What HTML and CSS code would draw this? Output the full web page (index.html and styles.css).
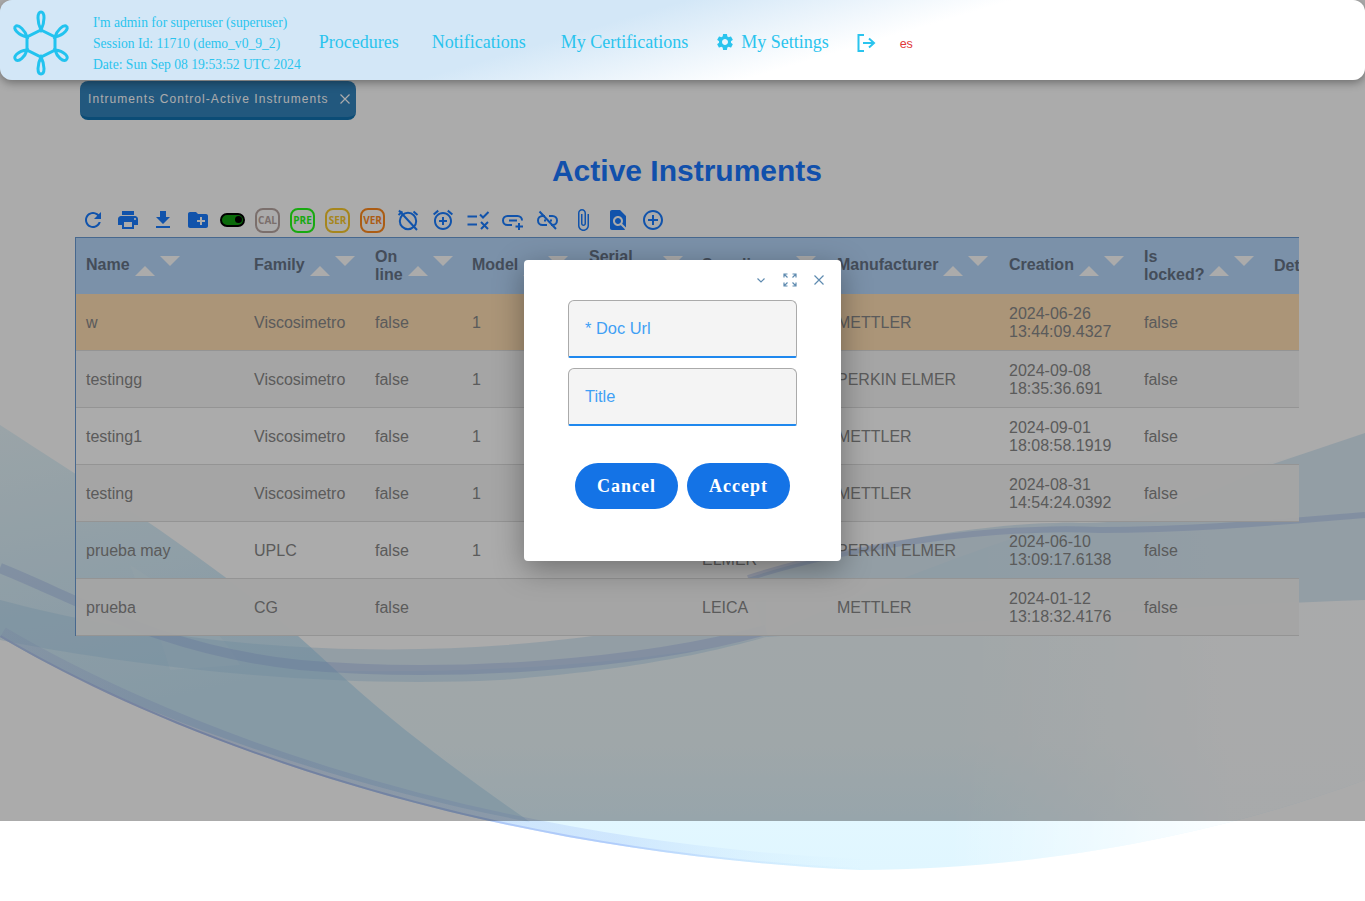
FILE: index.html
```html
<!DOCTYPE html>
<html lang="en">
<head>
    <meta charset="UTF-8">
    <title>Active Instruments</title>
    <link rel="stylesheet" href="styles.css">
</head>
<body>
    <!-- fondo decorativo -->
    <svg class="waves" viewBox="0 0 1365 901" width="1365" height="901" aria-hidden="true">
        <defs>
            <linearGradient id="mainFill" x1="0" y1="0" x2="0" y2="1">
                <stop offset="0" stop-color="#f4fbfd"/>
                <stop offset="0.7" stop-color="#eef9fd"/>
                <stop offset="0.88" stop-color="#e2f7ff"/>
                <stop offset="1" stop-color="#e0f6ff"/>
            </linearGradient>
            <linearGradient id="fadeOut" gradientUnits="userSpaceOnUse" x1="950" y1="0" x2="1230" y2="0">
                <stop offset="0" stop-color="#fff" stop-opacity="0"/>
                <stop offset="1" stop-color="#fff" stop-opacity=".85"/>
            </linearGradient>
            <linearGradient id="fanFill" gradientUnits="userSpaceOnUse" x1="0" y1="430" x2="60" y2="720">
                <stop offset="0" stop-color="#e6f5fb"/>
                <stop offset="1" stop-color="#c8e6f7"/>
            </linearGradient>
            <linearGradient id="edgeFill" gradientUnits="userSpaceOnUse" x1="0" y1="0" x2="880" y2="0">
                <stop offset="0" stop-color="#b0c2ee"/>
                <stop offset="0.25" stop-color="#98aeea"/>
                <stop offset="0.7" stop-color="#a4c2fa"/>
                <stop offset="1" stop-color="#c8ecff" stop-opacity="0"/>
            </linearGradient>
            <clipPath id="mainClip">
                <path d="M0 637C140 720 440 850 860 870C1050 870 1230 830 1365 780V440H0Z"/>
            </clipPath>
        </defs>
        <path fill="url(#mainFill)" d="M0 637C140 720 440 850 860 870C1050 870 1230 830 1365 780V440C1180 480 950 550 766 637C600 675 250 690 0 637Z"/>
        <rect x="950" y="440" width="415" height="440" fill="url(#fadeOut)" clip-path="url(#mainClip)"/>
        <path fill="url(#fanFill)" d="M0 425C100 490 230 570 330 665C400 730 470 780 530 822C360 790 140 720 0 637Z"/>
        <path class="wave-left-2" d="M130 565C170 590 215 620 240 665L170 670C160 630 140 595 130 565Z"/>
        <path class="wave-mid" d="M0 600C300 680 600 650 766 600L766 637C720 650 640 670 500 680C300 690 100 660 0 640Z"/>
        <path class="wave-right" d="M748 578C850 545 1000 520 1079 523C1150 525 1200 495 1270 465L1365 433V600C1200 605 1000 620 766 637Z"/>
        <path class="wave-strand" d="M0 568C80 600 160 650 300 665C450 678 640 665 766 630"/>
        <path class="wave-strand thin" d="M748 578C850 545 1000 525 1100 530C1200 530 1300 520 1365 515"/>
        <g clip-path="url(#mainClip)">
            <path class="wave-edge wide" d="M0 637C140 720 440 850 860 870"/>
            <path class="wave-edge" d="M0 637C140 720 440 850 860 870"/>
        </g>
    </svg>

    <header class="topbar">
        <svg class="logo" viewBox="0 0 56 66" width="56" height="66" aria-hidden="true">
            <path d="M28 20L42 27V40L28 47L14 40V27Z"/>
            <path d="M28 20C24 12 24 2 28 2C32 2 32 12 28 20Z"/>
            <path d="M28 47C24 55 24 64 28 64C32 64 32 55 28 47Z"/>
            <path d="M42 27C44 20 50 15 53 16C57 18 51 25 42 27Z"/>
            <path d="M42 40C51 41 57 47 53 50C50 52 44 47 42 40Z"/>
            <path d="M14 27C12 20 6 15 3 16C-1 18 5 25 14 27Z"/>
            <path d="M14 40C5 41 -1 47 3 50C6 52 12 47 14 40Z"/>
        </svg>
        <div class="session">
            <div>I'm admin for superuser (superuser)</div>
            <div>Session Id: 11710 (demo_v0_9_2)</div>
            <div>Date: Sun Sep 08 19:53:52 UTC 2024</div>
        </div>
        <nav class="menu">
            <a class="m-proc">Procedures</a>
            <a class="m-noti">Notifications</a>
            <a class="m-cert">My Certifications</a>
            <a class="m-sett">
                <svg viewBox="0 0 24 24" width="20" height="20" aria-hidden="true"><path d="M19.14 12.94c.04-.3.06-.61.06-.94 0-.32-.02-.64-.07-.94l2.03-1.58c.18-.14.23-.41.12-.61l-1.92-3.32c-.12-.22-.37-.29-.59-.22l-2.39.96c-.5-.38-1.03-.7-1.62-.94l-.36-2.54c-.04-.24-.24-.41-.48-.41h-3.84c-.24 0-.43.17-.47.41l-.36 2.54c-.59.24-1.13.57-1.62.94l-2.39-.96c-.22-.08-.47 0-.59.22L2.74 8.87c-.12.21-.08.47.12.61l2.03 1.58c-.05.3-.09.63-.09.94s.02.64.07.94l-2.03 1.58c-.18.14-.23.41-.12.61l1.92 3.32c.12.22.37.29.59.22l2.39-.96c.5.38 1.03.7 1.62.94l.36 2.54c.05.24.24.41.48.41h3.84c.24 0 .44-.17.47-.41l.36-2.54c.59-.24 1.13-.56 1.62-.94l2.39.96c.22.08.47 0 .59-.22l1.92-3.32c.12-.22.07-.47-.12-.61l-2.01-1.58zM12 15.6c-1.98 0-3.6-1.62-3.6-3.6s1.62-3.6 3.6-3.6 3.6 1.62 3.6 3.6-1.62 3.6-3.6 3.6z"/></svg>
                My Settings
            </a>
            <a class="m-out">
                <svg viewBox="0 0 20 20" width="20" height="20" aria-hidden="true"><path d="M8 2H2.500V18H8M7 10H18M13 5.500L18 10L13 14.500" fill="none" stroke-width="2"/></svg>
            </a>
            <a class="m-lang">es</a>
        </nav>
    </header>

    <main class="content">
        <div class="tabs">
            <div class="tab">
                Intruments Control-Active Instruments
                <svg class="tab-x" viewBox="0 0 10 10" width="10" height="10" aria-hidden="true"><path d="M.5 .5L9.500 9.500M9.500 .5L.5 9.500"/></svg>
            </div>
        </div>
        <h1 class="title">Active Instruments</h1>

        <div class="toolbar">
            <svg viewBox="0 0 24 24"><path d="M17.65 6.35C16.2 4.9 14.21 4 12 4c-4.42 0-7.99 3.58-7.99 8s3.57 8 7.99 8c3.73 0 6.84-2.55 7.73-6h-2.08c-.82 2.33-3.04 4-5.65 4-3.31 0-6-2.69-6-6s2.69-6 6-6c1.66 0 3.14.69 4.22 1.78L13 11h7V4l-2.35 2.35z"/></svg>
            <svg viewBox="0 0 24 24"><path d="M19 8H5c-1.66 0-3 1.34-3 3v6h4v4h12v-4h4v-6c0-1.66-1.34-3-3-3zm-3 11H8v-5h8v5zm3-7c-.55 0-1-.45-1-1s.45-1 1-1 1 .45 1 1-.45 1-1 1zm-1-9H6v4h12V3z"/></svg>
            <svg viewBox="0 0 24 24"><path d="M19 9h-4V3H9v6H5l7 7 7-7zM5 18v2h14v-2H5z"/></svg>
            <svg viewBox="0 0 24 24"><path d="M20 6h-8l-2-2H4c-1.11 0-1.99.89-1.99 2L2 18c0 1.11.89 2 2 2h16c1.11 0 2-.89 2-2V8c0-1.11-.89-2-2-2zm-1 8h-3v3h-2v-3h-3v-2h3V9h2v3h3v2z"/></svg>
            <span class="toggle"><span class="toggle-dot"></span></span>
            <span class="badge b-cal">CAL</span>
            <span class="badge b-pre">PRE</span>
            <span class="badge b-ser">SER</span>
            <span class="badge b-ver">VER</span>
            <svg viewBox="0 0 24 24" class="line"><circle cx="12" cy="13" r="8.200"/><path d="M3 2.500L21 22M2.500 7L6.500 3.500M21.500 7L17.500 3.500"/></svg>
            <svg viewBox="0 0 24 24"><path d="M7.88 3.39L6.6 1.86 2 5.71l1.29 1.53 4.59-3.85zM22 5.72l-4.6-3.86-1.29 1.53 4.6 3.86L22 5.72zM12 4c-4.97 0-9 4.03-9 9s4.02 9 9 9c4.97 0 9-4.03 9-9s-4.03-9-9-9zm0 16c-3.87 0-7-3.13-7-7s3.13-7 7-7 7 3.13 7 7-3.13 7-7 7zm1-11h-2v3H8v2h3v3h2v-3h3v-2h-3V9z"/></svg>
            <svg viewBox="0 0 24 24" class="line"><path d="M1.500 8.500H11M1.500 16.500H11M14 6.500L17 9.500L22.500 4M15 14L22 21M22 14L15 21"/></svg>
            <svg viewBox="0 0 24 24" class="line"><path d="M11 17H6.500C4 17 2 15 2 12.500S4 8 6.500 8H16.500C19 8 21 10 21 12.500M8 12.500H16M18 15V22M14.500 18.500H22"/></svg>
            <svg viewBox="0 0 24 24" class="line"><path d="M9 8H6.500C4 8 2 10 2 12.500S4 17 6.500 17H11M13 8H16.500C19 8 21 10 21 12.500S19 17 16.500 17H15M8 12.500H10M14 12.500H16M3.500 3.500L20 21"/></svg>
            <svg viewBox="0 0 24 24"><path d="M16.5 6v11.5c0 2.21-1.79 4-4 4s-4-1.79-4-4V5c0-1.38 1.12-2.5 2.5-2.5s2.5 1.12 2.5 2.5v10.5c0 .55-.45 1-1 1s-1-.45-1-1V6H10v9.500c0 1.38 1.12 2.5 2.5 2.5s2.5-1.12 2.5-2.5V5c0-2.21-1.79-4-4-4S7 2.79 7 5v12.500c0 3.04 2.46 5.5 5.5 5.5s5.5-2.46 5.5-5.5V6h-1.500z"/></svg>
            <svg viewBox="0 0 24 24"><path d="M20 19.59V8l-6-6H6c-1.1 0-1.99.9-1.99 2L4 20c0 1.1.89 2 1.99 2H18c.45 0 .85-.15 1.19-.4l-4.43-4.43c-.8.52-1.74.83-2.76.83-2.76 0-5-2.24-5-5s2.24-5 5-5 5 2.24 5 5c0 1.02-.31 1.96-.83 2.75L20 19.59zM9 13c0 1.66 1.34 3 3 3s3-1.34 3-3-1.34-3-3-3-3 1.34-3 3z"/></svg>
            <svg viewBox="0 0 24 24"><path d="M13 7h-2v4H7v2h4v4h2v-4h4v-2h-4V7zm-1-5C6.48 2 2 6.48 2 12s4.48 10 10 10 10-4.48 10-10S17.52 2 12 2zm0 18c-4.41 0-8-3.59-8-8s3.59-8 8-8 8 3.59 8 8-3.59 8-8 8z"/></svg>
        </div>

        <div class="table-wrap">
            <table class="grid">
                <colgroup>
                    <col class="c1"><col class="c2"><col class="c3"><col class="c4"><col class="c5">
                    <col class="c6"><col class="c7"><col class="c8"><col class="c9"><col class="c10">
                </colgroup>
                <thead>
                    <tr>
                        <th><div class="th-in"><span>Name</span><i class="up"></i><i class="down"></i></div></th>
                        <th><div class="th-in"><span>Family</span><i class="up"></i><i class="down"></i></div></th>
                        <th><div class="th-in"><span class="two">On<br>line</span><i class="up"></i><i class="down"></i></div></th>
                        <th><div class="th-in"><span>Model</span><i class="up"></i><i class="down"></i></div></th>
                        <th><div class="th-in"><span class="two">Serial<br>Num.</span><i class="up"></i><i class="down"></i></div></th>
                        <th><div class="th-in"><span>Supplier</span><i class="up"></i><i class="down"></i></div></th>
                        <th><div class="th-in"><span>Manufacturer</span><i class="up"></i><i class="down"></i></div></th>
                        <th><div class="th-in"><span>Creation</span><i class="up"></i><i class="down"></i></div></th>
                        <th><div class="th-in"><span class="two">Is<br>locked?</span><i class="up"></i><i class="down"></i></div></th>
                        <th>Details</th>
                    </tr>
                </thead>
                <tbody>
                    <tr class="selected"><td>w</td><td>Viscosimetro</td><td>false</td><td>1</td><td></td><td>LEICA</td><td>METTLER</td><td>2024-06-26 13:44:09.4327</td><td>false</td><td></td></tr>
                    <tr class="alt"><td>testingg</td><td>Viscosimetro</td><td>false</td><td>1</td><td></td><td>LEICA</td><td>PERKIN ELMER</td><td>2024-09-08 18:35:36.691</td><td>false</td><td></td></tr>
                    <tr><td>testing1</td><td>Viscosimetro</td><td>false</td><td>1</td><td></td><td>LEICA</td><td>METTLER</td><td>2024-09-01 18:08:58.1919</td><td>false</td><td></td></tr>
                    <tr class="alt"><td>testing</td><td>Viscosimetro</td><td>false</td><td>1</td><td></td><td>LEICA</td><td>METTLER</td><td>2024-08-31 14:54:24.0392</td><td>false</td><td></td></tr>
                    <tr><td>prueba may</td><td>UPLC</td><td>false</td><td>1</td><td></td><td>PERKIN ELMER</td><td>PERKIN ELMER</td><td>2024-06-10 13:09:17.6138</td><td>false</td><td></td></tr>
                    <tr class="alt"><td>prueba</td><td>CG</td><td>false</td><td></td><td></td><td>LEICA</td><td>METTLER</td><td>2024-01-12 13:18:32.4176</td><td>false</td><td></td></tr>
                </tbody>
            </table>
        </div>
    </main>

    <div class="overlay"></div>

    <section class="dialog">
        <div class="dialog-head">
            <svg viewBox="0 0 12 12" width="12" height="12"><path d="M2.500 4.500L6 8L9.500 4.500"/></svg>
            <svg viewBox="0 0 14 14" width="14" height="14"><path d="M1 4.500V1H4.500M9.500 1H13V4.500M1 9.500V13H4.500M9.500 13H13V9.500M1 1L4.500 4.500M13 1L9.500 4.500M1 13L4.500 9.500M13 13L9.500 9.500"/></svg>
            <svg viewBox="0 0 12 12" width="12" height="12"><path d="M1.500 1.500L10.500 10.500M10.500 1.500L1.500 10.500"/></svg>
        </div>
        <div class="field">* Doc Url</div>
        <div class="field">Title</div>
        <div class="dialog-buttons">
            <button class="btn">Cancel</button>
            <button class="btn">Accept</button>
        </div>
    </section>
</body>
</html>
```

FILE: styles.css
```css
html, body {
    margin: 0;
    height: 901px;
    overflow: hidden;
    background: #fff;
    font-family: "Liberation Sans", Arial, sans-serif;
}

/* fondo */
.waves {
    position: absolute;
    top: 0;
    left: 0;
}
.wave-left-2 { fill: #e8f8ff; opacity: .25; }
.wave-mid { fill: #a8cfec; opacity: .4; }
.wave-right { fill: #b9d9f0; opacity: .5; }
.wave-strand { fill: none; stroke: #94abe4; stroke-width: 10; opacity: .35; }
.wave-strand.thin { stroke-width: 6; opacity: .35; }
.wave-edge { fill: none; stroke: url(#edgeFill); stroke-width: 4; opacity: .7; }
.wave-edge.wide { stroke-width: 22; opacity: .3; }

/* cabecera */
.topbar {
    position: relative;
    z-index: 3;
    box-sizing: border-box;
    height: 80px;
    padding-top: 6px;
    display: flex;
    align-items: center;
    border-radius: 12px;
    background: linear-gradient(163.5deg, #d3e7f7 42%, #fff 62%);
    box-shadow: 0 3px 8px rgba(0, 0, 0, .35);
    color: #2ac4ee;
    font-family: "Liberation Serif", "Times New Roman", serif;
}
.logo {
    margin: 0 0 0 13px;
    flex: none;
    overflow: visible;
}
.logo path {
    fill: none;
    stroke: #22c3ef;
    stroke-width: 3;
}
.session {
    margin-left: 24px;
    font-size: 13.600px;
    line-height: 21px;
    white-space: nowrap;
}
.menu {
    display: flex;
    align-items: center;
    margin-bottom: 2px;
    font-size: 18px;
    white-space: nowrap;
}
.menu a { display: flex; align-items: center; }
.menu svg { fill: #2ac4ee; stroke: #2ac4ee; stroke-width: 0; }
.m-proc { margin-left: 18px; }
.m-noti { margin-left: 33px; }
.m-cert { margin-left: 35px; }
.m-sett { margin-left: 27px; gap: 6px; }
.m-out { margin: 2px 0 0 27px; }
.m-out svg { fill: none; stroke-width: 2; }
.m-lang {
    margin: 3px 0 0 24px;
    font-family: "Liberation Sans", Arial, sans-serif;
    font-size: 12.500px;
    color: #e03a3a;
}

/* contenido */
.content {
    position: relative;
    padding: 1px 66px 0 75px;
}
.tabs { padding-left: 5px; }
.tab {
    display: inline-flex;
    align-items: center;
    box-sizing: border-box;
    width: 276px;
    height: 39px;
    padding: 0 0 0 8px;
    border-radius: 8px;
    border-bottom: 3px solid #1172b0;
    background: #3383bd;
    color: #fff;
    font-size: 12px;
    letter-spacing: 1.060px;
    white-space: nowrap;
}
.tab-x {
    margin-left: 11px;
    fill: none;
    stroke: #fff;
    stroke-width: 1.200;
}
.title {
    margin: 33px 0 0;
    text-align: center;
    font-size: 30px;
    line-height: 36px;
    color: #1a78ff;
}
.toolbar {
    display: flex;
    align-items: center;
    gap: 11px;
    height: 24px;
    margin: 19px 0 5px 6px;
}
.toolbar svg {
    flex: none;
    width: 24px;
    height: 24px;
    fill: #1a7dff;
}
.toolbar svg.line {
    fill: none;
    stroke: #1a7dff;
    stroke-width: 2;
}
.toggle {
    flex: none;
    position: relative;
    box-sizing: border-box;
    width: 25px;
    height: 14px;
    margin-left: -1px;
    border: 2.500px solid #000;
    border-radius: 7px;
    background: #0f9f0f;
}
.toggle-dot {
    position: absolute;
    top: 1px;
    right: 1px;
    width: 7px;
    height: 7px;
    border-radius: 50%;
    background: #000;
}
.badge {
    flex: none;
    box-sizing: border-box;
    width: 25px;
    height: 25px;
    margin-right: -1px;
    border: 2.500px solid;
    border-radius: 8px;
    text-align: center;
    font-family: "Open Sans", sans-serif;
    font-size: 10px;
    font-weight: 700;
    line-height: 20px;
}
.b-cal { margin-left: -1px; color: #b8a6a2; }
.b-pre { color: #24fc18; }
.b-ser { color: #f8c82c; }
.b-ver { color: #ff8a1e; margin-right: 0; }

/* tabla */
.table-wrap {
    width: 1224px;
    overflow: hidden;
    border-left: 1px solid #6b9bd4;
    box-sizing: border-box;
}
.grid {
    border-collapse: separate;
    border-spacing: 0;
    table-layout: fixed;
    width: 1340px;
    font-size: 16px;
    line-height: 18px;
    color: #888;
}
.c1 { width: 168px; }
.c2 { width: 121px; }
.c3 { width: 97px; }
.c4 { width: 117px; }
.c5 { width: 113px; }
.c6 { width: 135px; }
.c7 { width: 172px; }
.c8 { width: 135px; }
.c9 { width: 130px; }
.c10 { width: 152px; }
.grid th {
    height: 57px;
    box-sizing: border-box;
    padding: 0 10px;
    background: #b8d8fc;
    border-top: 1px solid #6b9bd4;
    color: #667386;
    text-align: left;
    font-weight: 700;
}
.grid th span { margin-top: -2px; }
.grid th span.two { margin-top: 0; }
.grid td {
    height: 57px;
    box-sizing: border-box;
    padding: 2px 10px 0;
    border-bottom: 1px solid #ddd;
}
.selected td { background: #ffdeb4; }
.alt td { background: rgba(247, 247, 247, .95); }

.th-in {
    display: flex;
    align-items: center;
    gap: 5px;
    white-space: nowrap;
}
.up, .down {
    flex: none;
    width: 0;
    height: 0;
    border-left: 10px solid transparent;
    border-right: 10px solid transparent;
}
.up {
    margin-top: 10px;
    border-bottom: 10px solid #fff;
}
.down {
    margin-bottom: 10px;
    border-top: 10px solid #fff;
}

/* dialogo */
.overlay {
    position: absolute;
    z-index: 2;
    top: 0;
    left: 0;
    width: 100%;
    height: 821px;
    background: rgba(0, 0, 0, .33);
}
.dialog {
    position: absolute;
    z-index: 4;
    top: 260px;
    left: 524px;
    box-sizing: border-box;
    width: 317px;
    height: 301px;
    padding: 0 44px;
    border-radius: 4px;
    background: #fff;
    box-shadow: 0 8px 30px rgba(0, 0, 0, .35);
}
.dialog-head {
    display: flex;
    justify-content: flex-end;
    align-items: center;
    gap: 16px;
    height: 40px;
    margin-right: -28px;
}
.dialog-head svg {
    fill: none;
    stroke: #5f8bb0;
    stroke-width: 1.200;
}
.field {
    box-sizing: border-box;
    width: 229px;
    height: 58px;
    margin-bottom: 10px;
    padding: 0 16px;
    border: 1px solid #aaa;
    border-bottom: 2px solid #1f88ee;
    border-radius: 6px 6px 2px 2px;
    background: #f4f4f4;
    color: #3fa0f5;
    font-size: 16.400px;
    line-height: 55px;
}
.dialog-buttons {
    display: flex;
    gap: 9px;
    margin: 37px 0 0 7px;
}
.btn {
    width: 103px;
    height: 46px;
    border: none;
    border-radius: 23px;
    background: #1473e6;
    color: #fff;
    font-family: "Liberation Serif", "Times New Roman", serif;
    font-size: 18px;
    font-weight: 700;
    letter-spacing: 1px;
}
```
